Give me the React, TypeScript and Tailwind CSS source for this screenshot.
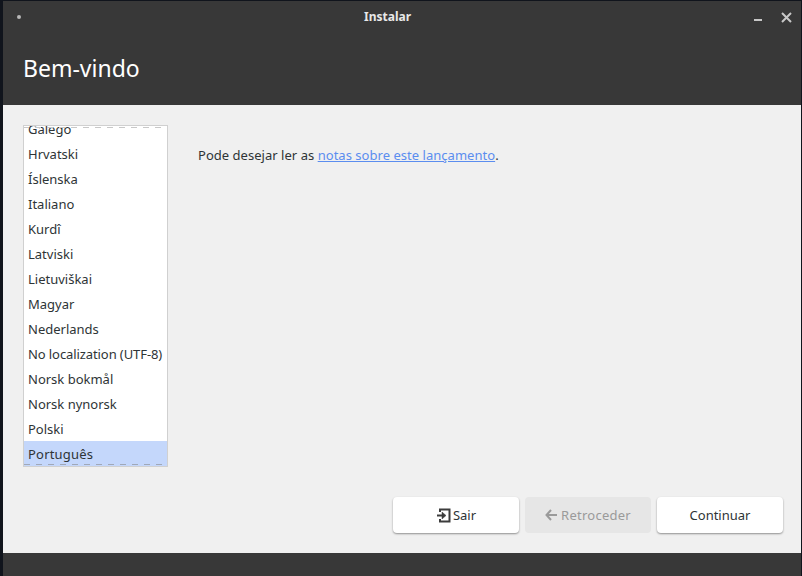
const languages = [
  'Galego',
  'Hrvatski',
  'Íslenska',
  'Italiano',
  'Kurdî',
  'Latviski',
  'Lietuviškai',
  'Magyar',
  'Nederlands',
  'No localization (UTF-8)',
  'Norsk bokmål',
  'Norsk nynorsk',
  'Polski',
  'Português',
];

function LanguageList() {
  return (
    <div className="relative w-[145px] h-[342px] border border-[#d0d0d0] bg-white overflow-hidden">
      <div className="-mt-[10px]">
        {languages.map((lang) => (
          <div
            key={lang}
            className={`h-[25px] pl-1 pt-[2px] flex items-center whitespace-nowrap ${lang === 'Português' ? 'bg-[#c4d7fb] tracking-[0.2px]' : ''}`}
          >
            <span className={lang.startsWith('No loc') ? 'tracking-[-0.09px]' : ''}>{lang}</span>
          </div>
        ))}
      </div>
      <div className="absolute top-[1px] inset-x-0 h-px bg-[linear-gradient(90deg,#c8c8c8_0_5px,transparent_5px_11px,#c8c8c8_11px_12px)] bg-[length:12px_1px]" />
      <div className="absolute bottom-[1px] inset-x-0 h-px bg-[linear-gradient(90deg,#a0a8b8_0_6px,transparent_6px_12px)] bg-[length:12px_1px]" />
    </div>
  );
}

export default function App() {
  return (
    <div className="w-[802px] h-[576px] bg-[#10141c] pl-[3px] pr-[1px] pt-[1px] text-[13px] text-[#2e3436] font-['Noto_Sans',sans-serif] overflow-hidden">
      <div className="h-full flex flex-col bg-[#f0f0f0]">
        <header className="h-[104px] bg-[#383838] text-white">
          <div className="relative h-[31px] flex items-center pl-[361px]">
            <span className="absolute left-[14px] top-[14px] w-1 h-1 rounded-full bg-[#b8b8b8]" />
            <span className="text-[12px] font-bold text-[#e8e8e8]">Instalar</span>
            <span className="absolute left-[751px] top-[18px] w-2 h-0.5 bg-[#c8c8c8]" />
            <svg className="absolute left-[778px] top-[11px] w-[11px] h-[11px]" viewBox="0 0 11 11">
              <path d="M1 1l9 9M10 1l-9 9" stroke="#c8c8c8" strokeWidth="2" />
            </svg>
          </div>
          <h1 className="pl-5 mt-[21px] text-[23px] leading-[30px]">Bem-vindo</h1>
        </header>
        <main className="flex-1 flex flex-col pt-5 pl-5 pr-[18px]">
          <div className="flex flex-1">
            <LanguageList />
            <p className="ml-[30px] mt-[21px] leading-[18px] tracking-[0.03px]">
              Pode desejar ler as{' '}
              <a className="text-[#5b8def] underline">notas sobre este lançamento</a>.
            </p>
          </div>
          <div className="flex justify-end gap-1.5 mb-5">
            <button className="w-[126px] h-[36px] pt-[2px] rounded bg-white shadow-[0_1px_2px_rgba(0,0,0,0.4)] flex items-center justify-center gap-[2px]">
              <svg className="w-[15px] h-[15px] -mt-[2px]" viewBox="0 0 15 15" fill="none" stroke="#3c3c3c">
                <path d="M4 4V1.5h9.5v12H4V11" strokeWidth="2" />
                <path d="M1 7.5h7" strokeWidth="2" />
                <path d="M6 4l4 3.5L6 11z" fill="#3c3c3c" strokeWidth="0.5" />
              </svg>
              Sair
            </button>
            <button className="w-[126px] h-[36px] pt-[2px] rounded bg-[#e6e6e6] text-[#9a9a9a] flex items-center justify-center gap-[4px] tracking-[0.25px]">
              <svg className="w-3 h-3 -mt-[2px]" viewBox="0 0 12 12" fill="none" stroke="#9a9a9a" strokeWidth="2">
                <path d="M6 1L1.5 6 6 11" />
                <path d="M2 6h10" />
              </svg>
              Retroceder
            </button>
            <button className="w-[126px] h-[36px] pt-[2px] rounded bg-white shadow-[0_1px_2px_rgba(0,0,0,0.4)] flex items-center justify-center">
              Continuar
            </button>
          </div>
        </main>
        <footer className="h-[23px] bg-[#383838]" />
      </div>
    </div>
  );
}
